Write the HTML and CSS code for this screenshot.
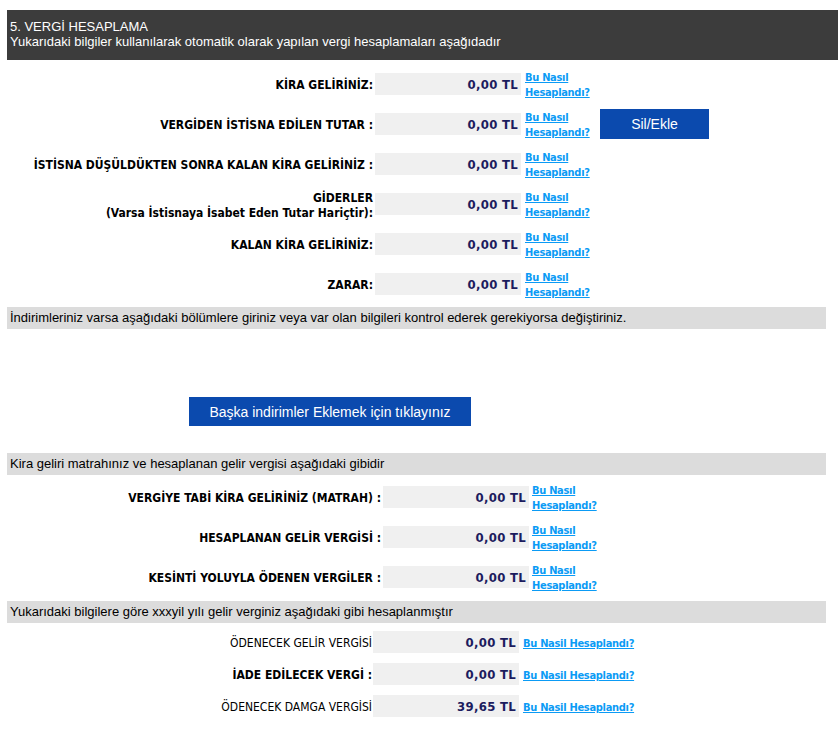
FILE: index.html
```html
<!DOCTYPE html>
<html lang="tr">
<head>
<meta charset="utf-8">
<title>Vergi Hesaplama</title>
<link rel="stylesheet" href="styles.css">
</head>
<body>
<div class="page">
  <div class="head">
    <div class="head-title">5. VERGİ HESAPLAMA</div>
    <div class="head-sub">Yukarıdaki bilgiler kullanılarak otomatik olarak yapılan vergi hesaplamaları aşağıdadır</div>
  </div>

  <div class="grid g1">
    <div class="lbl">KİRA GELİRİNİZ:</div>
    <div class="val">0,00 TL</div>
    <a class="lnk" href="#">Bu Nasıl<br>Hesaplandı?</a>
    <div></div>

    <div class="lbl">VERGİDEN İSTİSNA EDİLEN TUTAR :</div>
    <div class="val">0,00 TL</div>
    <a class="lnk" href="#">Bu Nasıl<br>Hesaplandı?</a>
    <button class="btn btn-sil" type="button">Sil/Ekle</button>

    <div class="lbl">İSTİSNA DÜŞÜLDÜKTEN SONRA KALAN KİRA GELİRİNİZ :</div>
    <div class="val">0,00 TL</div>
    <a class="lnk" href="#">Bu Nasıl<br>Hesaplandı?</a>
    <div></div>

    <div class="lbl">GİDERLER<br>(Varsa İstisnaya İsabet Eden Tutar Hariçtir):</div>
    <div class="val">0,00 TL</div>
    <a class="lnk" href="#">Bu Nasıl<br>Hesaplandı?</a>
    <div></div>

    <div class="lbl">KALAN KİRA GELİRİNİZ:</div>
    <div class="val">0,00 TL</div>
    <a class="lnk" href="#">Bu Nasıl<br>Hesaplandı?</a>
    <div></div>

    <div class="lbl">ZARAR:</div>
    <div class="val">0,00 TL</div>
    <a class="lnk" href="#">Bu Nasıl<br>Hesaplandı?</a>
    <div></div>
  </div>

  <div class="bar bar1">İndirimleriniz varsa aşağıdaki bölümlere giriniz veya var olan bilgileri kontrol ederek gerekiyorsa değiştiriniz.</div>

  <div class="btn-row">
    <button class="btn btn-wide" type="button">Başka indirimler Eklemek için tıklayınız</button>
  </div>

  <div class="bar bar2">Kira geliri matrahınız ve hesaplanan gelir vergisi aşağıdaki gibidir</div>

  <div class="grid g2">
    <div class="lbl">VERGİYE TABİ KİRA GELİRİNİZ (MATRAH) :</div>
    <div class="val">0,00 TL</div>
    <a class="lnk" href="#">Bu Nasıl<br>Hesaplandı?</a>

    <div class="lbl">HESAPLANAN GELİR VERGİSİ :</div>
    <div class="val">0,00 TL</div>
    <a class="lnk" href="#">Bu Nasıl<br>Hesaplandı?</a>

    <div class="lbl">KESİNTİ YOLUYLA ÖDENEN VERGİLER :</div>
    <div class="val">0,00 TL</div>
    <a class="lnk" href="#">Bu Nasıl<br>Hesaplandı?</a>
  </div>

  <div class="bar bar3">Yukarıdaki bilgilere göre xxxyil yılı gelir verginiz aşağıdaki gibi hesaplanmıştır</div>

  <div class="grid g3">
    <div class="lbl lbl-normal">ÖDENECEK GELİR VERGİSİ</div>
    <div class="val">0,00 TL</div>
    <a class="lnk" href="#">Bu Nasil Hesaplandı?</a>

    <div class="lbl">İADE EDİLECEK VERGİ :</div>
    <div class="val">0,00 TL</div>
    <a class="lnk" href="#">Bu Nasil Hesaplandı?</a>

    <div class="lbl lbl-normal">ÖDENECEK DAMGA VERGİSİ</div>
    <div class="val">39,65 TL</div>
    <a class="lnk" href="#">Bu Nasil Hesaplandı?</a>
  </div>
</div>
</body>
</html>
```

FILE: styles.css
```css
html, body {
  margin: 0;
  padding: 0;
  background: #ffffff;
}

.page {
  width: 838px;
  padding-top: 10px;
  font-family: "Liberation Sans", Arial, sans-serif;
  color: #000;
}

.head {
  margin-left: 7px;
  height: 50px;
  background: #3c3c3c;
  color: #ffffff;
  font-size: 13px;
  line-height: 15px;
  padding: 9px 0 0 3px;
  box-sizing: border-box;
}

.grid {
  display: grid;
  row-gap: 10px;
}

.g1 {
  margin-top: 9px;
  grid-template-columns: 373px 148px 79px 109px;
  grid-auto-rows: 30px;
}

.g2 {
  margin-top: 7px;
  grid-template-columns: 381px 148px auto;
  grid-auto-rows: 30px;
}

.g3 {
  margin-top: 8px;
  grid-template-columns: 372px 147px auto;
  grid-auto-rows: 22px;
}

.lbl {
  align-self: center;
  text-align: right;
  padding-top: 3px;
  font-family: "DejaVu Sans Condensed", "DejaVu Sans", sans-serif;
  font-weight: bold;
  font-size: 12px;
  line-height: 15px;
  color: #000;
  white-space: nowrap;
}

.lbl-normal {
  font-weight: normal;
}

.val {
  align-self: center;
  margin-left: 2px;
  height: 22px;
  box-sizing: border-box;
  padding: 1px 3px 0 0;
  background: #f0f0f0;
  text-align: right;
  font-family: "DejaVu Sans Condensed", "DejaVu Sans", sans-serif;
  font-weight: bold;
  font-size: 13px;
  letter-spacing: 0.3px;
  line-height: 21px;
  color: #1c1c5e;
}

.g3 .val {
  margin-left: 1px;
}

.lnk {
  align-self: center;
  padding: 2px 0 0 4px;
  font-family: "DejaVu Sans Condensed", "DejaVu Sans", sans-serif;
  font-weight: bold;
  font-size: 11px;
  letter-spacing: -0.3px;
  line-height: 15px;
  color: #0b9bf5;
  text-decoration: underline;
  white-space: nowrap;
}

.g2 .lnk {
  padding-left: 3px;
}

.btn {
  border: 0;
  margin: 0;
  padding: 0;
  background: #0b4aae;
  color: #ffffff;
  font-family: "Liberation Sans", Arial, sans-serif;
  font-size: 14px;
  cursor: pointer;
}

.btn-sil {
  width: 109px;
  height: 30px;
}

.bar {
  margin-left: 7px;
  width: 819px;
  height: 22px;
  background: #dcdcdc;
  font-size: 13px;
  line-height: 22px;
  padding-left: 3px;
  box-sizing: border-box;
}

.bar1 {
  margin-top: 8px;
}

.btn-row {
  padding: 68px 0 0 189px;
}

.btn-wide {
  width: 282px;
  height: 29px;
}

.bar2 {
  margin-top: 27px;
}

.bar3 {
  margin-top: 9px;
}
```
